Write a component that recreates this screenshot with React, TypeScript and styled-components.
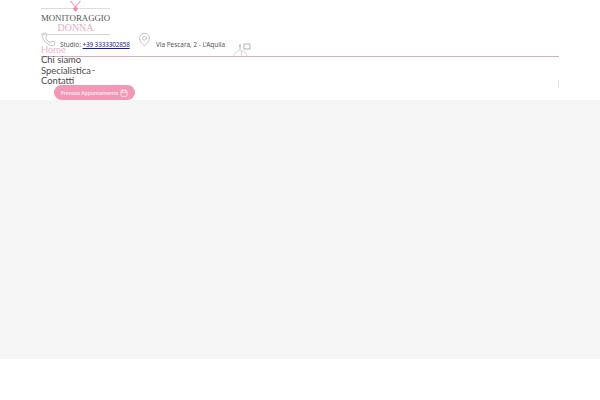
import { Calendar, MapPin, Phone } from "lucide-react";
import styled, { createGlobalStyle } from "styled-components";

const Global = createGlobalStyle`
  html, body { margin: 0; padding: 0; background: #fff; }
  body { font-family: "Noto Sans", "Open Sans", sans-serif; overflow: hidden; }
`;

const Page = styled.div`
  width: 600px;
  height: 400px;
  display: flex;
  flex-direction: column;
`;
const Header = styled.header`
  height: 100px;
  box-sizing: border-box;
  padding: 0 41px;
  flex: none;
`;
const Logo = styled.div`
  width: 69px;
  height: 35px;
  display: flex;
  flex-direction: column;
  align-items: center;
  border-bottom: 1px solid #d4d4d4;
  box-sizing: border-box;
  position: relative;
`;
const LogoRule = styled.div`
  width: 100%;
  height: 1px;
  background: #dcdcdc;
  margin-top: 8px;
`;
const LogoMark = styled.svg`
  position: absolute;
  top: 0;
  left: 28px;
`;
const LogoTop = styled.div`
  font-family: "Liberation Serif", serif;
  font-size: 8.9px;
  line-height: 10px;
  color: #555;
  margin-top: 4px;
  letter-spacing: -0.05px;
  white-space: nowrap;
`;
const LogoBottom = styled.div`
  font-family: "Liberation Serif", serif;
  font-size: 10px;
  line-height: 9px;
  color: #e0afc2;
`;
const ContactBar = styled.div`
  height: 22px;
  width: 518px;
  box-sizing: border-box;
  border-bottom: 1px solid #dcaabb;
  display: flex;
  align-items: flex-start;
`;
const ContactItem = styled.div<{ $width: number }>`
  width: ${(p) => p.$width}px;
  flex: none;
  display: flex;
  align-items: flex-start;
  font-size: 6.4px;
  color: #555;
  svg {
    margin-top: -3px;
    flex: none;
  }
`;
const ContactText = styled.span<{ $left: number }>`
  margin-left: ${(p) => p.$left}px;
  margin-top: 5px;
  line-height: 9px;
  white-space: nowrap;
  a {
    color: #1a1aa6;
    letter-spacing: -0.15px;
  }
`;
const Social = styled.div`
  width: 20px;
  height: 16px;
  margin-top: 5px;
  flex: none;
`;
const Nav = styled.nav`
  margin-top: -12px;
  width: 518px;
  display: flex;
  flex-direction: column;
  align-items: flex-start;
  position: relative;
`;
const NavLink = styled.a<{ $active?: boolean }>`
  font-family: "Lato", "Noto Sans", sans-serif;
  font-size: 9.4px;
  line-height: 10.3px;
  color: ${(p) => (p.$active ? "#e9b5c8" : "#4a4a4a")};
  white-space: nowrap;
  display: flex;
  align-items: center;
  gap: 1px;
`;
const Caret = styled.span`
  width: 3px;
  height: 1px;
  background: #999;
`;
const Tick = styled.span`
  position: absolute;
  right: 0;
  top: 35px;
  width: 1px;
  height: 8px;
  background: #e6e6e6;
`;
const CtaRow = styled.div`
  display: flex;
  margin-left: 13px;
  margin-top: -1px;
`;
const Cta = styled.button`
  width: 81px;
  height: 15px;
  padding: 0;
  border: 0;
  border-radius: 8px;
  background: #f297b6;
  color: #fdeaf0;
  font-family: inherit;
  font-size: 5px;
  font-weight: 600;
  display: flex;
  align-items: center;
  justify-content: center;
  gap: 2px;
`;
const Band = styled.main`
  height: 259px;
  background: #f5f5f5;
  flex: none;
`;

export default function App() {
  return (
    <Page>
      <Global />
      <Header>
        <Logo>
          <LogoRule />
          <LogoMark width="13" height="13" viewBox="0 0 13 13">
            <path d="M1.5 1 L6.5 7 L11.5 1" fill="none" stroke="#e9b5c8" strokeWidth="1.2" />
            <path d="M6.5 6 L9 9 L6.5 12 L4 9 Z" fill="#e88fae" />
          </LogoMark>
          <LogoTop>MONITORAGGIO</LogoTop>
          <LogoBottom>DONNA</LogoBottom>
        </Logo>
        <ContactBar>
          <ContactItem $width={96}>
            <Phone size={15} strokeWidth={1.1} color="#aaa" />
            <ContactText $left={4}>
              Studio: <a href="#">+39 3333302858</a>
            </ContactText>
          </ContactItem>
          <ContactItem $width={96}>
            <MapPin size={15} strokeWidth={1.1} color="#aaa" />
            <ContactText $left={4}>Via Pescara, 2 - L'Aquila</ContactText>
          </ContactItem>
          <Social>
            <svg width="20" height="16" viewBox="0 0 20 16">
              <path d="M7 3 V9 M6 5 H8" stroke="#aaa" strokeWidth="0.8" fill="none" />
              <rect x="11" y="3" width="6" height="5" fill="none" stroke="#aaa" strokeWidth="0.9" />
              <path d="M1 15 C2 10 6 9 9 10 M14 15 C13 12 11 10 9 10 C8 11 8 13 9 15" stroke="#bbb" strokeWidth="0.6" fill="none" />
            </svg>
          </Social>
        </ContactBar>
        <Nav>
          <NavLink $active>Home</NavLink>
          <NavLink>Chi siamo</NavLink>
          <NavLink>
            Specialistica<Caret />
          </NavLink>
          <NavLink>Contatti</NavLink>
          <Tick />
          <CtaRow>
            <Cta>
              Prenota Appuntamento <Calendar size={8} strokeWidth={2.4} />
            </Cta>
          </CtaRow>
        </Nav>
      </Header>
      <Band />
    </Page>
  );
}
